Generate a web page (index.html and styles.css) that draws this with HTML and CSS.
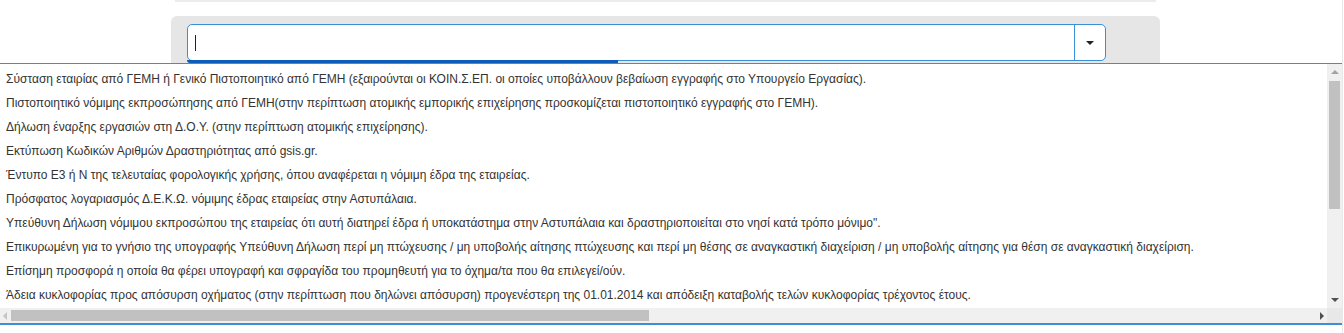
FILE: index.html
```html
<!DOCTYPE html>
<html lang="el">
<head>
  <meta charset="UTF-8" />
  <title>Δικαιολογητικά</title>
  <link rel="stylesheet" href="styles.css">
</head>
<body>
  <div class="topline"></div>
  <div class="panel">
    <div class="combo">
      <div class="combo-input"><span class="caret"></span></div>
      <div class="combo-btn"><span class="tri"></span></div>
    </div>
    <div class="focusbar"></div>
  </div>

  <div class="dropdown">
    <div class="dd-main">
      <ul class="dd-list">
        <li>Σύσταση εταιρίας από ΓΕΜΗ ή Γενικό Πιστοποιητικό από ΓΕΜΗ (εξαιρούνται οι ΚΟΙΝ.Σ.ΕΠ. οι οποίες υποβάλλουν βεβαίωση εγγραφής στο Υπουργείο Εργασίας).</li>
        <li>Πιστοποιητικό νόμιμης εκπροσώπησης από ΓΕΜΗ(στην περίπτωση ατομικής εμπορικής επιχείρησης προσκομίζεται πιστοποιητικό εγγραφής στο ΓΕΜΗ).</li>
        <li>Δήλωση έναρξης εργασιών στη Δ.Ο.Υ. (στην περίπτωση ατομικής επιχείρησης).</li>
        <li>Εκτύπωση Κωδικών Αριθμών Δραστηριότητας από gsis.gr.</li>
        <li>Έντυπο Ε3 ή Ν της τελευταίας φορολογικής χρήσης, όπου αναφέρεται η νόμιμη έδρα της εταιρείας.</li>
        <li>Πρόσφατος λογαριασμός Δ.Ε.Κ.Ω. νόμιμης έδρας εταιρείας στην Αστυπάλαια.</li>
        <li>Υπεύθυνη Δήλωση νόμιμου εκπροσώπου της εταιρείας ότι αυτή διατηρεί έδρα ή υποκατάστημα στην Αστυπάλαια και δραστηριοποιείται στο νησί κατά τρόπο μόνιμο".</li>
        <li>Επικυρωμένη για το γνήσιο της υπογραφής Υπεύθυνη Δήλωση περί μη πτώχευσης / μη υποβολής αίτησης πτώχευσης και περί μη θέσης σε αναγκαστική διαχείριση / μη υποβολής αίτησης για θέση σε αναγκαστική διαχείριση.</li>
        <li>Επίσημη προσφορά η οποία θα φέρει υπογραφή και σφραγίδα του προμηθευτή για το όχημα/τα που θα επιλεγεί/ούν.</li>
        <li>Άδεια κυκλοφορίας προς απόσυρση οχήματος (στην περίπτωση που δηλώνει απόσυρση) προγενέστερη της 01.01.2014 και απόδειξη καταβολής τελών κυκλοφορίας τρέχοντος έτους.</li>
      </ul>
      <div class="vscroll">
        <span class="arr up"></span>
        <div class="vtrack"><div class="vthumb"></div></div>
        <span class="arr down"></span>
      </div>
    </div>
    <div class="hscroll">
      <span class="arr left"></span>
      <div class="htrack"><div class="hthumb"></div></div>
      <span class="arr right"></span>
      <span class="corner"></span>
    </div>
  </div>
</body>
</html>
```

FILE: styles.css
```css
:root {
  --blue: #3a8fd6;
  --dark-blue: #0d5db8;
  --panel: #e6e6e6;
  --track: #f0f0f0;
  --thumb: #c1c1c1;
  --text: #333333;
}

* {
  box-sizing: border-box;
  font-family: "Liberation Sans", Arial, sans-serif;
}

body {
  margin: 0;
  width: 1343px;
  height: 333px;
  background: white;
  border-right: 1px solid #e8e8e8;
  overflow: hidden;
  position: relative;
}

.topline {
  margin-left: 175px;
  width: 981px;
  height: 2px;
  background: #ececec;
}

.panel {
  margin: 14px 0 0 171px;
  width: 989px;
  height: 120px;
  background: var(--panel);
  border-radius: 6px 6px 0 0;
  padding: 8px 0 0 16px;
  position: relative;
}

.combo {
  display: flex;
  width: 919px;
  height: 37px;
  border: 1px solid var(--blue);
  border-radius: 5px;
  background: white;
}

.combo-input {
  flex: 1;
  display: flex;
  align-items: center;
  padding-left: 7px;
}

.caret {
  width: 1px;
  height: 16px;
  background: #222;
}

.combo-btn {
  width: 31px;
  border-left: 1px solid var(--blue);
  display: flex;
  align-items: center;
  justify-content: center;
}

.tri {
  width: 0;
  height: 0;
  border-left: 4px solid transparent;
  border-right: 4px solid transparent;
  border-top: 4px solid #222;
}

.focusbar {
  position: absolute;
  left: 16px;
  top: 44px;
  width: 431px;
  height: 3px;
  background: var(--dark-blue);
  border-radius: 0 0 0 3px;
}

/* lista desplegable */
.dropdown {
  position: absolute;
  left: 0;
  top: 63px;
  width: 1343px;
  height: 262px;
  background: white;
  border-top: 1px solid var(--blue);
  border-bottom: 2px solid var(--blue);
  border-right: 1px solid #e2e2e2;
  display: flex;
  flex-direction: column;
}

.dd-main {
  flex: 1;
  display: flex;
  min-height: 0;
}

.dd-list {
  flex: 1;
  list-style: none;
  margin: 0;
  padding: 3px 0 0 6px;
  overflow: hidden;
}

.dd-list li {
  font-size: 12px;
  line-height: 24px;
  height: 24px;
  color: var(--text);
  white-space: nowrap;
}

.vscroll {
  width: 15px;
  background: var(--track);
  display: flex;
  flex-direction: column;
  align-items: center;
}

.vtrack {
  flex: 1;
  width: 100%;
  padding: 0 2px;
}

.vthumb {
  margin-top: 3px;
  height: 128px;
  background: var(--thumb);
}

.arr {
  width: 0;
  height: 0;
  display: block;
}

.arr.up {
  margin: 6px 0 4px;
  border-left: 4px solid transparent;
  border-right: 4px solid transparent;
  border-bottom: 4px solid #a3a3a3;
}

.arr.down {
  margin: 4px 0 6px;
  border-left: 4px solid transparent;
  border-right: 4px solid transparent;
  border-top: 4px solid #505050;
}

.hscroll {
  height: 15px;
  background: var(--track);
  display: flex;
  align-items: center;
}

.arr.left {
  margin: 0 4px 0 3px;
  border-top: 4px solid transparent;
  border-bottom: 4px solid transparent;
  border-right: 4px solid #c4c4c4;
}

.htrack {
  flex: 1;
  height: 100%;
  padding: 2px 0;
}

.hthumb {
  width: 638px;
  height: 100%;
  background: var(--thumb);
}

.arr.right {
  margin: 0 3px 0 4px;
  border-top: 4px solid transparent;
  border-bottom: 4px solid transparent;
  border-left: 4px solid #505050;
}

.corner {
  width: 15px;
  height: 100%;
  background: #e8e8e8;
}
```
